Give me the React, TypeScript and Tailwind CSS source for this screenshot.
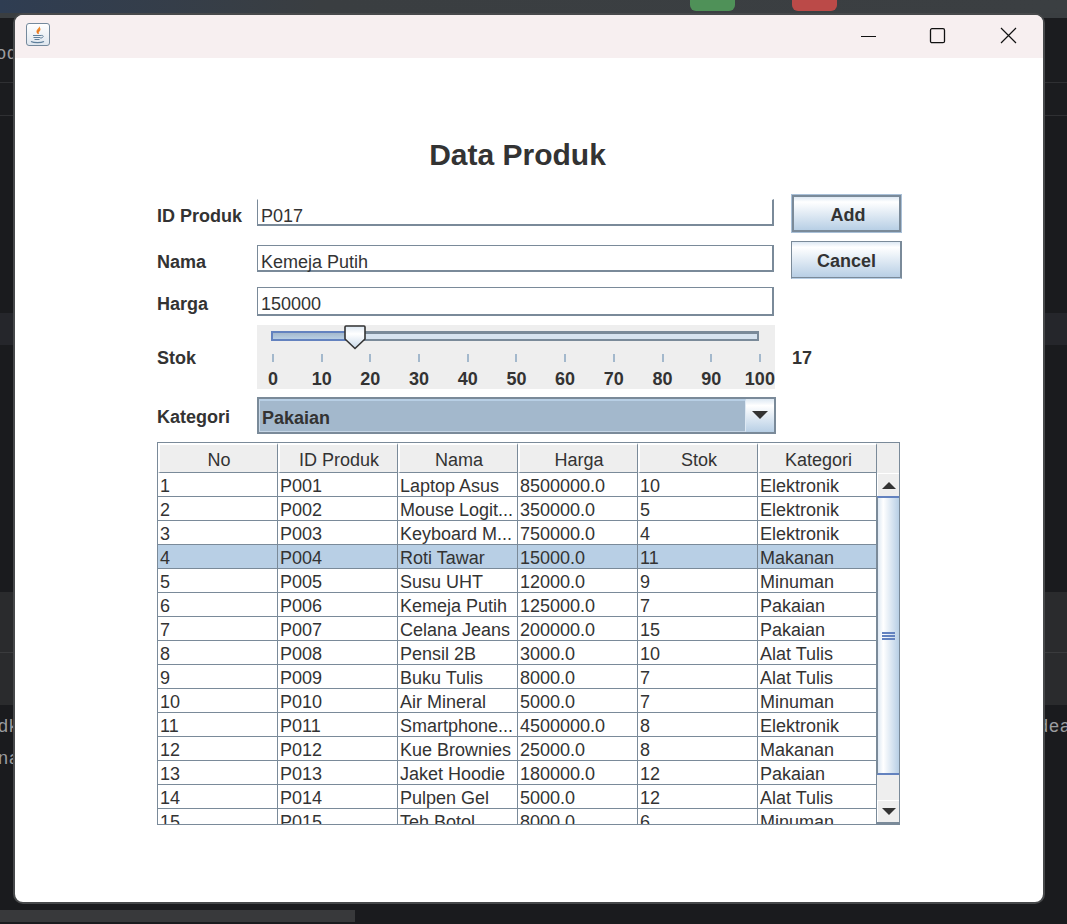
import { ReactNode } from 'react'

const rows = [
  ['1', 'P001', 'Laptop Asus', '8500000.0', '10', 'Elektronik'],
  ['2', 'P002', 'Mouse Logit...', '350000.0', '5', 'Elektronik'],
  ['3', 'P003', 'Keyboard M...', '750000.0', '4', 'Elektronik'],
  ['4', 'P004', 'Roti Tawar', '15000.0', '11', 'Makanan'],
  ['5', 'P005', 'Susu UHT', '12000.0', '9', 'Minuman'],
  ['6', 'P006', 'Kemeja Putih', '125000.0', '7', 'Pakaian'],
  ['7', 'P007', 'Celana Jeans', '200000.0', '15', 'Pakaian'],
  ['8', 'P008', 'Pensil 2B', '3000.0', '10', 'Alat Tulis'],
  ['9', 'P009', 'Buku Tulis', '8000.0', '7', 'Alat Tulis'],
  ['10', 'P010', 'Air Mineral', '5000.0', '7', 'Minuman'],
  ['11', 'P011', 'Smartphone...', '4500000.0', '8', 'Elektronik'],
  ['12', 'P012', 'Kue Brownies', '25000.0', '8', 'Makanan'],
  ['13', 'P013', 'Jaket Hoodie', '180000.0', '12', 'Pakaian'],
  ['14', 'P014', 'Pulpen Gel', '5000.0', '12', 'Alat Tulis'],
  ['15', 'P015', 'Teh Botol', '8000.0', '6', 'Minuman'],
]
const headers = ['No', 'ID Produk', 'Nama', 'Harga', 'Stok', 'Kategori']
const ticks = [0, 10, 20, 30, 40, 50, 60, 70, 80, 90, 100]

function Label({ children }: { children: ReactNode }) {
  return <div className="w-[100px] shrink-0 text-[18px] leading-[22px] font-bold text-[#333333]">{children}</div>
}

function Field({ value, noTop }: { value: string; noTop?: boolean }) {
  return (
    <div
      className={`h-full w-[517px] border-t border-l border-r-2 border-b-2 border-[#7a8a99] pt-[5px] pl-[3px] text-[18px] leading-[22px] text-[#333333] ${noTop ? 'border-t-white' : ''}`}
    >
      {value}
    </div>
  )
}

function MetalButton({ label, focused }: { label: string; focused?: boolean }) {
  return (
    <div className={`h-full w-[111px] border ${focused ? 'border-[#a9c0d8]' : 'border-[#7a8a99] border-b-[#b8cfe5]'}`}>
      <div
        className={`flex h-full items-center justify-center bg-linear-to-b from-[#dde8f3] via-white via-15% to-[#b8cfe5] pt-[4px] text-[18px] font-bold text-[#333333] ${focused ? 'border-2 border-[#7a8a99] pl-[3px]' : 'border-r border-b border-[#7a8a99] pl-[1px]'}`}
      >
        {label}
      </div>
    </div>
  )
}

function JavaIcon() {
  return (
    <div className="mt-[8px] ml-[11px] flex h-[23px] w-[24px] items-center justify-center rounded-[3px] border border-[#74899c] bg-linear-to-b from-white to-[#dfe6ee]">
      <svg width="16" height="19" viewBox="0 0 16 19" fill="none">
        <path d="M9 1c1 2-3 3.500-2.500 6 .2 1 1 1.500 1.500 2-.2-1.500 2.500-3 2.500-4.500C10.500 3 9.500 2 9 1z" fill="#ee8a2c" />
        <path d="M8.500 5c-1 1.500-1 2.500 0 4" stroke="#e9701c" strokeWidth="1" />
        <path d="M3 10.500h8M3.500 12.500h7M4.500 14.500h5" stroke="#5f7f9b" strokeWidth="1" />
        <path d="M11 10.500c2 -.5 3 .8 1.500 2l-2 .8" stroke="#5f7f9b" strokeWidth="1" />
        <path d="M1 16.500c3 1.600 10 1.600 13 0" stroke="#5f7f9b" strokeWidth="1.200" />
      </svg>
    </div>
  )
}

function WindowControls() {
  return (
    <div className="ml-auto flex h-full items-center pr-[25px] pb-[1px]">
      <svg width="18" height="18" viewBox="0 0 18 18" className="mr-[51px]" stroke="#111111" fill="none">
        <path d="M1 9.500h15" />
      </svg>
      <svg width="18" height="18" viewBox="0 0 18 18" className="mr-[53px]" stroke="#111111" fill="none" strokeWidth="1.300">
        <rect x="1.500" y="1.700" width="14" height="14" rx="1.500" />
      </svg>
      <svg width="18" height="18" viewBox="0 0 18 18" stroke="#111111" fill="none" strokeWidth="1.200">
        <path d="M1 1l15 15M16 1L1 16" />
      </svg>
    </div>
  )
}

function Slider() {
  return (
    <div className="relative h-full w-[518px] bg-[#eeeeee] pr-[15px] pl-[16px]">
      <div className="mt-[6px] -ml-[2px] flex h-[10px] w-[488px] overflow-hidden border-t-[3px] border-r-2 border-b-2 border-[#7a8a99] bg-[#d7e3ef]" />
      <div className="absolute top-[6px] left-[14px] h-[10px] w-[80px] border-y-2 border-l-2 border-[#6382bf] bg-linear-to-b from-[#a3b8cc] to-[#b8cfe5]" />
      <svg width="24" height="25" viewBox="0 0 24 25" className="absolute top-0 left-[86px]">
        <defs>
          <linearGradient id="thumb" x1="0" y1="0" x2="0" y2="1">
            <stop offset="0" stopColor="#dde8f3" />
            <stop offset="0.35" stopColor="#ffffff" />
            <stop offset="1" stopColor="#c8d9ea" />
          </linearGradient>
        </defs>
        <path d="M3 1h18a1 1 0 0 1 1 1v12L12 23.500 2 14V2a1 1 0 0 1 1-1z" fill="url(#thumb)" stroke="#333333" strokeWidth="1.600" />
      </svg>
      <div className="mt-[13px] flex h-[8px] justify-between">
        {ticks.map(t => (
          <div key={t} className="flex w-0 justify-center">
            <div className="h-[8px] w-[2px] shrink-0 bg-[#a3b8cc]" />
          </div>
        ))}
      </div>
      <div className="mt-[6px] flex justify-between">
        {ticks.map(t => (
          <div key={t} className="flex w-0 justify-center text-[18px] leading-[22px] font-bold whitespace-nowrap text-[#333333]">
            {t}
          </div>
        ))}
      </div>
    </div>
  )
}

function Combo() {
  return (
    <div className="flex h-full w-[519px] border-2 border-[#7a8a99]">
      <div className="flex-1 border-t-2 border-r border-b border-l border-t-[#b8cfe5] border-r-[#dde8f3] border-b-[#c6d6e6] border-l-[#c6d6e6] bg-[#a3b8cc] pl-[2px] pt-[6px] text-[18px] leading-[22px] font-bold text-[#333333]">
        Pakaian
      </div>
      <div className="flex w-[28px] items-center justify-center bg-linear-to-b from-[#dde8f3] via-white via-20% to-[#b8cfe5] pb-[2px]">
        <svg width="16" height="8" viewBox="0 0 16 8">
          <path d="M0 0h16L8 8z" fill="#333333" />
        </svg>
      </div>
    </div>
  )
}

function ScrollArrow({ up }: { up?: boolean }) {
  return (
    <svg width="14" height="7" viewBox="0 0 14 7">
      <path d={up ? 'M0 7h14L7 0z' : 'M0 0h14L7 7z'} fill="#333333" />
    </svg>
  )
}

function Scrollbar() {
  return (
    <div className="flex w-[22px] shrink-0 flex-col">
      <div className="h-[30px] bg-[#eeeeee]" />
      <div className="flex h-[23px] items-center justify-center border-t border-l border-white bg-[#eeeeee]">
        <ScrollArrow up />
      </div>
      <div className="flex h-[279px] items-center justify-center border-t-2 border-b-2 border-l border-l-[#7a8a99] border-t-[#6382bf] border-b-[#6382bf] bg-linear-to-r from-[#dde8f3] via-white via-25% to-[#b8cfe5]">
        <div className="flex w-[13px] flex-col gap-[1px]">
          <div className="h-[2px] bg-[#6382bf]" />
          <div className="h-[2px] bg-[#6382bf]" />
          <div className="h-[2px] bg-[#6382bf]" />
        </div>
      </div>
      <div className="h-[25px] bg-[#eeeeee]" />
      <div className="flex h-[22px] items-center justify-center border-t border-l border-white bg-[#eeeeee]">
        <ScrollArrow />
      </div>
      <div className="flex-1 bg-[#7a8a99]" />
    </div>
  )
}

function ProductTable() {
  return (
    <div className="flex h-[383px] w-[743px] overflow-hidden border border-[#7a8a99]">
      <div className="w-[719px] shrink-0 overflow-hidden">
        <div className="grid h-[30px] grid-cols-[120px_120px_120px_120px_120px_119px]">
          {headers.map(h => (
            <div
              key={h}
              className="flex items-center justify-center border-t-2 border-r border-b border-l-2 border-t-white border-r-[#7a8a99] border-b-[#7a8a99] border-l-white bg-[#eeeeee] pt-[2px] pl-[1px] text-[18px] leading-[20px] text-[#333333]"
            >
              {h}
            </div>
          ))}
        </div>
        {rows.map(row => (
          <div
            key={row[0]}
            className={`grid h-[24px] grid-cols-[120px_120px_120px_120px_120px_119px] ${row[0] === '4' ? 'bg-[#b8cfe5]' : ''}`}
          >
            {row.map((cell, i) => (
              <div key={i} className="overflow-hidden border-r border-b border-[#7a8a99] pl-[2px] text-[18px] leading-[27px] whitespace-nowrap text-[#333333]">
                {cell}
              </div>
            ))}
          </div>
        ))}
      </div>
      <Scrollbar />
    </div>
  )
}

function Backdrop() {
  return (
    <div className="flex h-full flex-col text-[18px] tracking-[1px] text-[#9b9da0]">
      <div className="flex h-[13px] shrink-0 bg-linear-to-r from-[#2f3d52] via-[#3a3e41] via-30% to-[#3b3f42] pl-[690px]">
        <div className="h-[11px] w-[45px] rounded-b-[6px] bg-[#4f9158]" />
        <div className="ml-[57px] h-[11px] w-[45px] rounded-b-[6px] bg-[#bb4a48]" />
      </div>
      <div className="flex h-[5px] shrink-0 bg-[#3a3e41]" />
      <div className="flex h-[65px] shrink-0 items-center overflow-hidden border-b border-[#2f3033] bg-[#1b1c1f] pt-[6px]">
        <span className="-ml-[4px]">od</span>
      </div>
      <div className="h-[33px] shrink-0 border-b border-[#2f3033] bg-[#1b1c1f]" />
      <div className="h-[197px] shrink-0 bg-[#1a1b1e]" />
      <div className="h-[32px] shrink-0 bg-[#25262b]" />
      <div className="h-[247px] shrink-0 bg-[#1a1b1e]" />
      <div className="h-[61px] shrink-0 border-b border-[#3a3b3d] bg-[#2a2b2d]" />
      <div className="h-[52px] shrink-0 bg-[#2a2b2d]" />
      <div className="flex flex-1 flex-col bg-[#1a1b1e]">
        <div className="mt-[8px] flex h-[26px] justify-between overflow-hidden leading-[26px]">
          <span className="-ml-[2px]">dk</span>
          <span className="-mr-[4px]">dea</span>
        </div>
        <div className="mt-[6px] h-[26px] overflow-hidden leading-[26px]">
          <span className="-ml-[2px] inline-block">na</span>
        </div>
        <div className="mt-auto mb-[2px] h-[12px] w-[355px] bg-[#38393b]" />
      </div>
    </div>
  )
}

export default function App() {
  return (
    <div className="relative h-[924px] w-[1067px] overflow-hidden font-['Liberation_Sans',Arial,sans-serif]">
      <Backdrop />

      <div className="absolute top-[13px] left-[13px] h-[891px] w-[1032px] overflow-hidden rounded-[10px] border-2 border-[#47494b] bg-white">
        <div className="flex h-[43px] bg-[#f7eff0]">
          <JavaIcon />
          <WindowControls />
        </div>

        <div className="pl-[142px]">
          <h1 className="mt-[79px] h-[36px] w-[721px] text-center text-[30px] leading-[36px] font-bold text-[#333333]">Data Produk</h1>

          <div className="mt-[21px] flex h-[39px]">
            <div className="pt-[11px]"><Label>ID Produk</Label></div>
            <div className="mt-[5px] h-[27px]"><Field value="P017" noTop /></div>
            <div className="ml-[17px]"><MetalButton label="Add" focused /></div>
          </div>

          <div className="mt-[8px] flex h-[38px]">
            <div className="pt-[10px]"><Label>Nama</Label></div>
            <div className="mt-[4px] h-[27px]"><Field value="Kemeja Putih" /></div>
            <div className="ml-[17px]"><MetalButton label="Cancel" /></div>
          </div>

          <div className="mt-[8px] flex h-[29px]">
            <div className="pt-[6px]"><Label>Harga</Label></div>
            <Field value="150000" />
          </div>

          <div className="mt-[9px] flex h-[64px]">
            <div className="pt-[22px]"><Label>Stok</Label></div>
            <Slider />
            <div className="ml-[17px] pt-[22px] text-[18px] leading-[22px] font-bold text-[#333333]">17</div>
          </div>

          <div className="mt-[8px] flex h-[37px]">
            <div className="pt-[9px]"><Label>Kategori</Label></div>
            <Combo />
          </div>

          <div className="mt-[8px]">
            <ProductTable />
          </div>
        </div>
      </div>
    </div>
  )
}
